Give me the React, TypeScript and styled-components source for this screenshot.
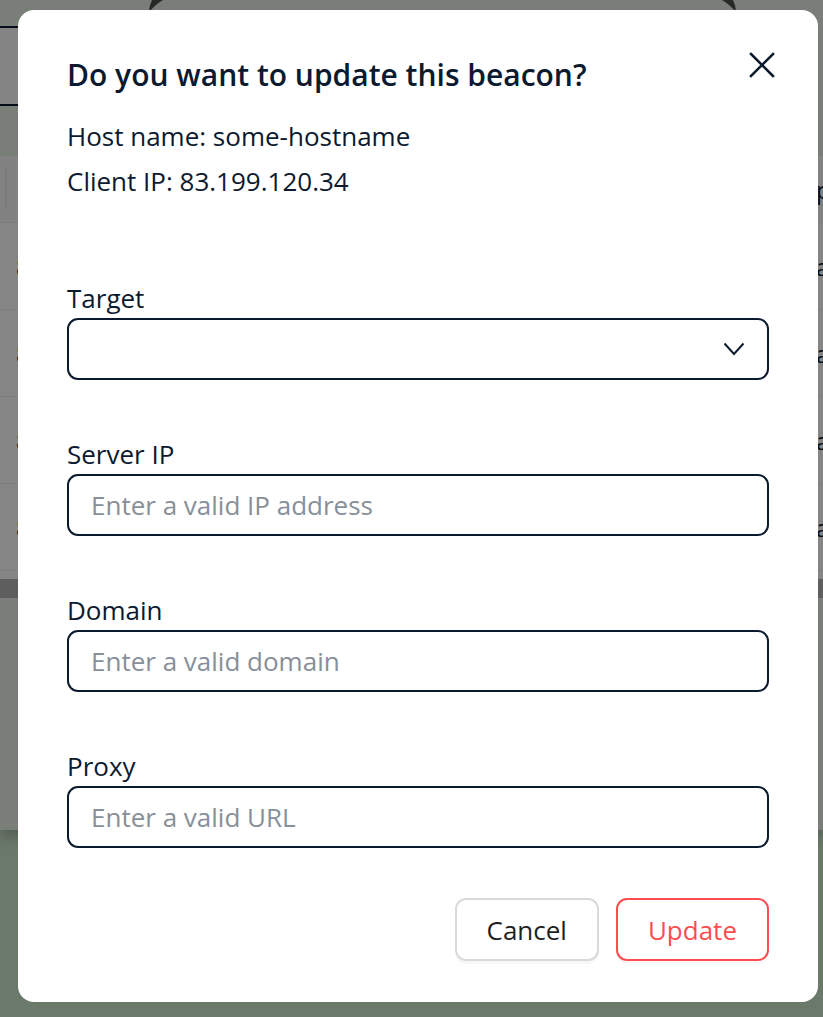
import React from "react";
import styled, { createGlobalStyle } from "styled-components";

const GlobalStyle = createGlobalStyle`
  html, body { margin: 0; padding: 0; }
  body {
    font-family: "Open Sans", "Noto Sans", Arial, sans-serif;
    background: #cfe9cf;
    overflow: hidden;
  }
  * { box-sizing: border-box; }
`;

const Page = styled.div`
  position: relative;
  width: 823px;
  height: 1017px;
  overflow: hidden;
  background: #cde8cc;
`;

const Panel = styled.div`
  height: 830px;
  background: #e9f4e6;
  display: flex;
  flex-direction: column;
  box-shadow: 0 6px 14px rgba(0, 0, 0, 0.25);
`;

const Decor = styled.div`
  height: 26px;
  display: flex;
  align-items: flex-start;
`;

const DecorMark = styled.svg<{ $offset: number }>`
  margin-left: ${(p) => p.$offset}px;
  flex: none;
`;

const Toolbar = styled.div`
  width: 680px;
  height: 80px;
  border-top: 2px solid #0b1a2e;
  border-bottom: 2px solid #0b1a2e;
  background: #fdfdfd;
`;

const Table = styled.div`
  margin-top: 50px;
  background: #ffffff;
  display: flex;
  flex-direction: column;
`;

const Row = styled.div<{ $header?: boolean }>`
  height: ${(p) => (p.$header ? 67 : 87)}px;
  display: flex;
  align-items: center;
  justify-content: space-between;
  border-bottom: 1px solid #efefef;
  padding: 0 0 0 16px;
  font-size: 24px;
  color: #0b1a2e;
  background: ${(p) => (p.$header ? "#fafafa" : "#fff")};
`;

const HeaderSep = styled.div`
  width: 2px;
  height: 40px;
  background: #eaeaea;
  margin-left: -11px;
`;

const FirstCell = styled.span`
  width: 14px;
  overflow: hidden;
  white-space: nowrap;
`;

const LastCell = styled.span`
  width: 7px;
  overflow: hidden;
  white-space: nowrap;
  color: #0b1a2e;
`;

const Scroll = styled.div`
  margin-top: 8px;
  height: 19px;
  background: #b5b5b5;
`;

const Overlay = styled.div`
  position: absolute;
  inset: 0;
  background: rgba(0, 0, 0, 0.48);
`;

const Modal = styled.div`
  position: absolute;
  left: 18px;
  top: 10px;
  width: 800px;
  height: 992px;
  background: #ffffff;
  border-radius: 16px;
  padding: 47px 49px 40px;
  display: flex;
  flex-direction: column;
  color: #0b1a2e;
`;

const TitleRow = styled.div`
  display: flex;
  align-items: center;
  justify-content: space-between;
  height: 36px;
`;

const Title = styled.h2`
  margin: 0;
  font-size: 30px;
  font-weight: 600;
  line-height: 36px;
  color: #0b1a2e;
`;

const CloseButton = styled.button`
  border: none;
  background: none;
  padding: 0;
  margin-right: -7px;
  margin-top: -20px;
  width: 28px;
  height: 28px;
  display: flex;
  align-items: center;
  justify-content: center;
  cursor: pointer;
`;

const Info = styled.div`
  margin-top: 21px;
  font-size: 26px;
  line-height: 45px;
`;

const Form = styled.div`
  margin-top: 78px;
  display: flex;
  flex-direction: column;
  gap: 58px;
`;

const Field = styled.div`
  display: flex;
  flex-direction: column;
  gap: 4px;
`;

const Label = styled.label`
  font-size: 26px;
  line-height: 32px;
  color: #0b1a2e;
`;

const Control = styled.div`
  height: 62px;
  border: 2px solid #0b1a2e;
  border-radius: 11px;
  display: flex;
  align-items: center;
  justify-content: space-between;
  padding: 0 22px 0 22px;
  background: #fff;
`;

const Input = styled.input`
  border: none;
  outline: none;
  flex: 1;
  font-family: inherit;
  font-size: 26px;
  color: #0b1a2e;
  background: transparent;
  padding: 0;
  &::placeholder { color: #878f99; }
`;

const Footer = styled.div`
  margin-top: 50px;
  display: flex;
  justify-content: flex-end;
  gap: 17px;
`;

const Button = styled.button<{ $danger?: boolean }>`
  height: 63px;
  padding: 0 30px;
  border-radius: 11px;
  background: #fff;
  font-family: inherit;
  font-size: 26px;
  border: 2px solid ${(p) => (p.$danger ? "#ff4d4f" : "#d9d9d9")};
  color: ${(p) => (p.$danger ? "#ff4d4f" : "#1f1f1f")};
  box-shadow: 0 3px 0 rgba(0, 0, 0, 0.03);
  cursor: pointer;
`;

const CloseIcon = () => (
  <svg width="26" height="26" viewBox="0 0 26 26" fill="none">
    <path d="M2 2 L24 24 M24 2 L2 24" stroke="#0b1a2e" strokeWidth="2.6" strokeLinecap="square" />
  </svg>
);

const Chevron = () => (
  <svg width="22" height="14" viewBox="0 0 22 14" fill="none">
    <path d="M1.5 1.5 L11 12 L20.5 1.5" stroke="#0b1a2e" strokeWidth="2" />
  </svg>
);

const rows = ["83.199.120.34", "83.199.120.35", "83.199.120.36", "83.199.120.37"];

export default function App() {
  return (
    <>
      <GlobalStyle />
      <Page>
        <Panel>
          <Decor>
            <DecorMark $offset={147} width="16" height="12" viewBox="0 0 16 12">
              <path d="M5 0 L16 0 Q9 4 2 12 Q2 6 5 0Z" fill="#4a504a" />
            </DecorMark>
            <DecorMark $offset={559} width="16" height="12" viewBox="0 0 16 12">
              <path d="M0 0 L11 0 Q14 6 14 12 Q7 4 0 0Z" fill="#4a504a" />
            </DecorMark>
          </Decor>
          <Toolbar />
          <Table>
            <Row $header>
              <HeaderSep />
              <LastCell>p</LastCell>
            </Row>
            {rows.map((r) => (
              <Row key={r}>
                <FirstCell>{r.slice(0, 1)}</FirstCell>
                <LastCell>a</LastCell>
              </Row>
            ))}
            <Scroll />
          </Table>
        </Panel>
        <Overlay />
        <Modal>
          <TitleRow>
            <Title>Do you want to update this beacon?</Title>
            <CloseButton aria-label="Close">
              <CloseIcon />
            </CloseButton>
          </TitleRow>
          <Info>
            <div>Host name: some-hostname</div>
            <div>Client IP: 83.199.120.34</div>
          </Info>
          <Form>
            <Field>
              <Label>Target</Label>
              <Control>
                <span />
                <Chevron />
              </Control>
            </Field>
            <Field>
              <Label>Server IP</Label>
              <Control>
                <Input placeholder="Enter a valid IP address" />
              </Control>
            </Field>
            <Field>
              <Label>Domain</Label>
              <Control>
                <Input placeholder="Enter a valid domain" />
              </Control>
            </Field>
            <Field>
              <Label>Proxy</Label>
              <Control>
                <Input placeholder="Enter a valid URL" />
              </Control>
            </Field>
          </Form>
          <Footer>
            <Button>Cancel</Button>
            <Button $danger>Update</Button>
          </Footer>
        </Modal>
      </Page>
    </>
  );
}
